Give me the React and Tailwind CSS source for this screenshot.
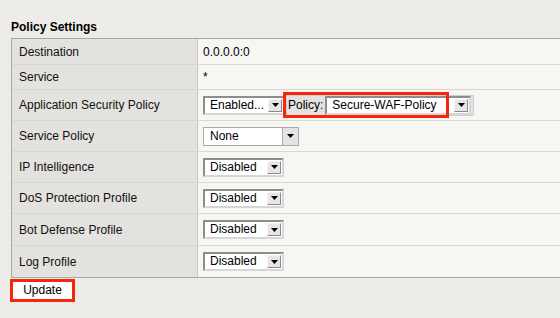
import React from 'react';

const font = { fontFamily: '"Liberation Sans", Arial, sans-serif' };

function Arrow() {
  return (
    <svg width="7" height="4" viewBox="0 0 7 4" className="block">
      <path d="M0 0 H7 L3.5 4 Z" fill="#000" />
    </svg>
  );
}

// old-school 3D select box
function Select3D({ value, width }) {
  return (
    <div
      className="flex h-[19px] items-stretch border-2 border-t-[#8d8d8d] border-l-[#8d8d8d] border-b-[#d6d6d6] border-r-[#d6d6d6] bg-white"
      style={{ width }}
    >
      <div className="flex-1 pl-[5px] text-[12px] leading-[15px] text-black">{value}</div>
      <div className="my-[1px] mr-[1px] flex w-[14px] items-center justify-center border border-t-[#f4f4f4] border-l-[#f4f4f4] border-b-[#8a8a8a] border-r-[#8a8a8a] bg-[#e6e6e6]">
        <Arrow />
      </div>
    </div>
  );
}

function Row({ label, h, children, last }) {
  return (
    <div className={`flex ${h} ${last ? '' : 'border-b border-[#d9d7d3]'}`}>
      <div className="flex w-[186px] items-center border-r border-[#c9c7c3] bg-[#e3e2de] pl-[7px] text-[12px] text-[#111]">
        {label}
      </div>
      <div className="relative flex flex-1 items-center bg-[#f7f6f3] pl-[5px] text-[12px] text-black">
        {children}
      </div>
    </div>
  );
}

export default function App() {
  return (
    <div className="h-[318px] w-[560px] overflow-hidden bg-[#edece9]" style={font}>
      <div className="pl-[11px] pt-[20px]">
        <div className="h-[14px] text-[12px] font-bold leading-[14px] text-black">Policy Settings</div>
      </div>

      <div className="ml-[11px] mt-[4px] w-[600px] border-t border-l border-b border-[#a6a6a6]">
        <Row label="Destination" h="h-[26px]">0.0.0.0:0</Row>
        <Row label="Service" h="h-[25px]">*</Row>
        <Row label="Application Security Policy" h="h-[31px]">
          <div className="flex items-center">
            <Select3D value="Enabled..." width={82} />
            <div className="ml-[1px] flex h-[21px] items-center border border-[#cfcfcf] bg-[#e2e2e0] pl-[1px] pr-[2px]">
              <span className="pr-[2px] text-[12px]">Policy:</span>
              <Select3D value="Secure-WAF-Policy" width={146} />
            </div>
          </div>
          <div className="pointer-events-none absolute left-[85px] top-[2px] h-[26px] w-[166px] border-[3px] border-[#f5260c]" />
        </Row>
        <Row label="Service Policy" h="h-[31px]">
          <div className="flex h-[19px] w-[96px] items-stretch border border-[#a9a9a9] bg-white">
            <div className="flex-1 pl-[6px] text-[12px] leading-[17px]">None</div>
            <div className="flex w-[16px] items-center justify-center border-l border-[#a9a9a9] bg-[#e4e4e4]">
              <Arrow />
            </div>
          </div>
        </Row>
        <Row label="IP Intelligence" h="h-[31px]">
          <Select3D value="Disabled" width={81} />
        </Row>
        <Row label="DoS Protection Profile" h="h-[31px]">
          <Select3D value="Disabled" width={81} />
        </Row>
        <Row label="Bot Defense Profile" h="h-[32px]">
          <Select3D value="Disabled" width={81} />
        </Row>
        <Row label="Log Profile" h="h-[31px]" last>
          <Select3D value="Disabled" width={81} />
        </Row>
      </div>

      <div className="ml-[10px] mt-[1px] flex h-[23px] w-[65px] items-center justify-center border-[3px] border-[#f5260c] bg-white pb-[2px] text-[12px] text-black">
        Update
      </div>
    </div>
  );
}
